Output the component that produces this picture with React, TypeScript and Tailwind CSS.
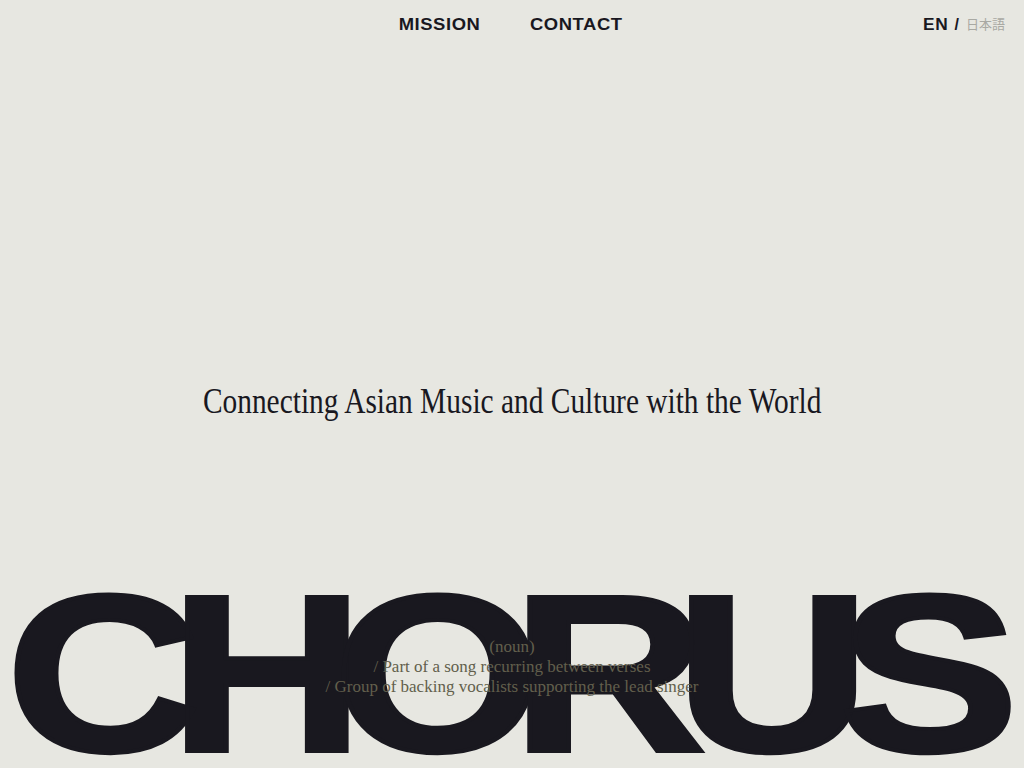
const App = () => {
  return (
    <main className="h-screen w-full overflow-hidden bg-[#e7e7e1] text-[#19181f] flex flex-col font-['Liberation_Sans',Arial,sans-serif]">
      <header className="h-12 grid grid-cols-[1fr_auto_1fr] items-center px-[19px] pt-[2px]">
        <div />
        <nav className="flex gap-[61px] text-[16px] font-bold tracking-[0.5px] leading-none -ml-[3px]">
          <a href="#" className="inline-block scale-x-[1.15]">MISSION</a>
          <a href="#" className="inline-block scale-x-[1.15]">CONTACT</a>
        </nav>
        <div className="flex justify-end items-center leading-none">
          <span className="inline-block text-[16px] font-bold tracking-[0.5px] scale-x-[1.08]">EN</span>
          <span className="text-[16px] font-bold ml-[7px]">/</span>
          <span className="ml-[7px] -mt-[3px] text-[13px] text-[#a9a9a3] font-['Noto_Sans_CJK_JP',sans-serif]">日本語</span>
        </div>
      </header>

      <section className="pt-[336px] flex justify-center">
        <h1 className="inline-block scale-x-[0.84] text-[35px] leading-none font-normal whitespace-nowrap font-['Liberation_Serif','Times_New_Roman',serif]">
          Connecting Asian Music and Culture with the World
        </h1>
      </section>

      <section className="mt-auto relative h-[207px]">
        <div className="absolute left-0 top-0 w-full flex justify-center">
          <span className="inline-block whitespace-nowrap scale-x-[1.205] text-[224px] leading-none font-bold tracking-[-26px] pr-[26px] [-webkit-text-stroke:4px_#19181f]">
            CHORUS
          </span>
        </div>
        <div className="absolute inset-x-0 top-[76px] text-center text-[17px] leading-[20px] text-[#625f4c] font-['Liberation_Serif','Times_New_Roman',serif]">
          <p>(noun)</p>
          <p>/ Part of a song recurring between verses</p>
          <p>/ Group of backing vocalists supporting the lead singer</p>
        </div>
      </section>
    </main>
  );
};

export default App;
